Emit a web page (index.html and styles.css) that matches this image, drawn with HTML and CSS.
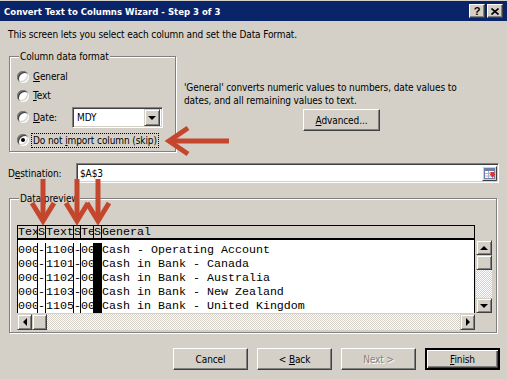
FILE: index.html
```html
<!DOCTYPE html>
<html lang="en">
<head>
  <meta charset="UTF-8" />
  <title>Convert Text to Columns Wizard - Step 3 of 3</title>
  <link rel="stylesheet" href="styles.css">
</head>
<body>
  <div class="window">
    <div class="titlebar">
      <span class="title">Convert Text to Columns Wizard - Step 3 of 3</span>
      <div class="title-buttons">
        <span class="tbtn">?</span>
        <span class="tbtn">
          <svg width="8" height="7" viewBox="0 0 8 7"><path d="M0.5 0.5 L7.5 6.5 M7.5 0.5 L0.5 6.5" stroke="#000" stroke-width="1.6"/></svg>
        </span>
      </div>
    </div>

    <div class="content">
      <p class="intro">This screen lets you select each column and set the Data Format.</p>

      <div class="top-row">
        <fieldset class="group format">
          <legend>Column data format</legend>
          <div class="radio-row"><span class="radio"></span><span><u>G</u>eneral</span></div>
          <div class="radio-row"><span class="radio"></span><span><u>T</u>ext</span></div>
          <div class="radio-row date-row">
            <span class="radio"></span>
            <span class="date-label"><u>D</u>ate:</span>
            <div class="select">
              <span class="select-value">MDY</span>
              <span class="select-btn"><span class="tri-down"></span></span>
            </div>
          </div>
          <div class="radio-row skip-row">
            <span class="radio checked"></span>
            <span class="focused">Do not <u>i</u>mport column (skip)</span>
          </div>
        </fieldset>

        <div class="info">
          <p>'General' converts numeric values to numbers, date values to<br>dates, and all remaining values to text.</p>
          <button class="btn advanced"><u>A</u>dvanced...</button>
        </div>
      </div>

      <div class="dest-row">
        <span class="dest-label">D<u>e</u>stination:</span>
        <div class="field">
          <span class="field-value">$A$3</span>
          <svg class="ref-icon" width="15" height="15" viewBox="0 0 15 15">
            <rect x="0.5" y="0.5" width="14" height="14" fill="#d4d0c8"/>
            <path d="M0.5 14.5 V0.5 H14.5" stroke="#fff" fill="none"/>
            <path d="M0.5 14.5 H14.5 V0.5" stroke="#404040" fill="none"/>
            <rect x="2.5" y="2.5" width="10" height="10" fill="#fff" stroke="#6d7fa8"/>
            <rect x="3" y="3" width="9" height="2" fill="#6d7fa8"/>
            <path d="M3 7.5 H12 M3 10 H12 M6.5 5 V12" stroke="#9fb3d8"/>
            <path d="M7 6 L12 6 L12 8 L13.5 8 L10.5 12 L7.5 8 L9 8 L9 7 Z" fill="#e0342a"/>
          </svg>
        </div>
      </div>

      <fieldset class="group preview">
        <legend>Data preview</legend>
        <div class="preview-grid">
          <div class="grid-head">
            <span class="c c1">Tex</span><span class="c c2">S</span><span class="c c3">Text</span><span class="c c4">S</span><span class="c c5">Te</span><span class="c c6">S</span><span class="c c7">General</span>
          </div>
          <div class="grid-body">
            <div class="grid-row"><span class="c c1">000</span><span class="c c2">-</span><span class="c c3">1100</span><span class="c c4">-</span><span class="c c5">00</span><span class="c c6 skip"></span><span class="c c7">Cash - Operating Account</span></div>
            <div class="grid-row"><span class="c c1">000</span><span class="c c2">-</span><span class="c c3">1101</span><span class="c c4">-</span><span class="c c5">00</span><span class="c c6 skip"></span><span class="c c7">Cash in Bank - Canada</span></div>
            <div class="grid-row"><span class="c c1">000</span><span class="c c2">-</span><span class="c c3">1102</span><span class="c c4">-</span><span class="c c5">00</span><span class="c c6 skip"></span><span class="c c7">Cash in Bank - Australia</span></div>
            <div class="grid-row"><span class="c c1">000</span><span class="c c2">-</span><span class="c c3">1103</span><span class="c c4">-</span><span class="c c5">00</span><span class="c c6 skip"></span><span class="c c7">Cash in Bank - New Zealand</span></div>
            <div class="grid-row"><span class="c c1">000</span><span class="c c2">-</span><span class="c c3">1105</span><span class="c c4">-</span><span class="c c5">00</span><span class="c c6 skip"></span><span class="c c7">Cash in Bank - United Kingdom</span></div>
          </div>
          <div class="vscroll">
            <span class="sbtn"><span class="tri-up"></span></span>
            <span class="thumb"></span>
            <span class="track"></span>
            <span class="sbtn"><span class="tri-down"></span></span>
          </div>
          <div class="hscroll">
            <span class="sbtn"><span class="tri-left"></span></span>
            <span class="thumb"></span>
            <span class="track"></span>
            <span class="sbtn"><span class="tri-right"></span></span>
          </div>
        </div>
      </fieldset>
    </div>

    <div class="actions">
      <button class="btn">Cancel</button>
      <button class="btn">&lt; <u>B</u>ack</button>
      <button class="btn disabled">Next &gt;</button>
      <button class="btn default"><u>F</u>inish</button>
    </div>

    <!-- flechas rojas de anotación -->
    <svg class="arrows" width="507" height="379" viewBox="0 0 507 379">
      <g stroke="#c4472d" stroke-width="5" fill="none" stroke-linejoin="miter">
        <path d="M169 141 H229"/>
        <path d="M188 128 L169 141 L188 154"/>
        <path d="M43 179 V220"/>
        <path d="M32 203 L43 221 L54 203"/>
        <path d="M77 179 V220"/>
        <path d="M66 203 L77 221 L88 203"/>
        <path d="M98 179 V220"/>
        <path d="M87 203 L98 221 L109 203"/>
      </g>
    </svg>
  </div>
</body>
</html>
```

FILE: styles.css
```css
* {
  box-sizing: border-box;
}

body {
  margin: 0;
  background: #d4d0c8;
  font-family: 'DejaVu Sans Condensed', 'Liberation Sans', Arial, sans-serif;
  font-size: 10px;
  letter-spacing: -0.1px;
  color: #000;
}

.window {
  position: relative;
  width: 507px;
  height: 379px;
  padding-top: 1px;
  background: #d4d0c8;
  overflow: hidden;
}

/* barra de título */
.titlebar {
  height: 20px;
  background: #0a246a;
  display: flex;
  align-items: center;
  justify-content: space-between;
  padding: 0 4px;
}

.title {
  color: #fff;
  font-weight: bold;
  font-size: 9.5px;
  letter-spacing: 0;
}

.title-buttons {
  display: flex;
  gap: 2px;
}

.tbtn {
  width: 16px;
  height: 14px;
  background: #d4d0c8;
  border: 1px solid;
  border-color: #fff #404040 #404040 #fff;
  box-shadow: inset -1px -1px #808080;
  display: flex;
  align-items: center;
  justify-content: center;
  font-family: 'Liberation Sans', Arial, sans-serif;
  font-weight: bold;
  font-size: 11px;
  line-height: 11px;
}

.content {
  padding: 0 8px;
}

.intro {
  margin: 7px 0 0;
  line-height: 13px;
}

p {
  margin: 0;
}

/* marcos agrupados */
.group {
  margin: 0;
  padding: 0;
  min-width: 0;
  border: 1px solid #808080;
  box-shadow: inset 1px 1px #fff, 1px 1px #fff;
}

.group legend {
  margin-left: 2px;
  padding: 0 1px;
  line-height: 13px;
  background: #d4d0c8;
}

.top-row {
  display: flex;
  gap: 8px;
  margin-top: 9px;
}

.format {
  width: 167px;
  margin-left: 1px;
  padding: 4px 0 0 7px;
}

.radio-row {
  display: flex;
  align-items: center;
  gap: 4px;
  height: 19px;
}

.date-row {
  height: 24px;
}

.skip-row {
  height: 22px;
}

.radio {
  position: relative;
  width: 12px;
  height: 12px;
  flex: none;
  border-radius: 50%;
  background: #fff;
  box-shadow: inset 1px 1px #808080, inset -1px -1px #fff, inset 2px 2px #404040, inset -2px -2px #d4d0c8;
}

.radio.checked::after {
  content: '';
  position: absolute;
  left: 4px;
  top: 4px;
  width: 4px;
  height: 4px;
  border-radius: 50%;
  background: #000;
}

.date-label {
  width: 35px;
}

.select {
  width: 91px;
  height: 21px;
  display: flex;
  align-items: center;
  justify-content: space-between;
  background: #fff;
  border: 1px solid;
  border-color: #808080 #fff #fff #808080;
  box-shadow: inset 1px 1px #404040, inset -1px -1px #d4d0c8;
  padding: 2px;
}

.select-value {
  padding-left: 2px;
}

.select-btn {
  width: 16px;
  height: 17px;
  background: #d4d0c8;
  border: 1px solid;
  border-color: #d4d0c8 #404040 #404040 #d4d0c8;
  box-shadow: inset 1px 1px #fff, inset -1px -1px #808080;
  display: flex;
  align-items: center;
  justify-content: center;
}

.focused {
  outline: 1px dotted #000;
  padding: 0 1px;
  margin-left: -1px;
  line-height: 13px;
}

/* triangulitos */
.tri-down,
.tri-up,
.tri-left,
.tri-right {
  width: 0;
  height: 0;
  border: 4px solid transparent;
}

.tri-down {
  border-top-color: #000;
  border-bottom-width: 0;
  margin-top: 1px;
}

.tri-up {
  border-bottom-color: #000;
  border-top-width: 0;
}

.tri-left {
  border-right-color: #000;
  border-left-width: 0;
}

.tri-right {
  border-left-color: #000;
  border-right-width: 0;
}

.info {
  width: 315px;
  padding-top: 31px;
  line-height: 13px;
}

.btn {
  font-family: inherit;
  font-size: 10px;
  letter-spacing: inherit;
  color: #000;
  background: #d4d0c8;
  width: 75px;
  height: 22px;
  padding: 0;
  border: 1px solid;
  border-color: #fff #404040 #404040 #fff;
  box-shadow: inset -1px -1px #808080;
  border-radius: 0;
}

.advanced {
  display: block;
  width: 77px;
  margin: 2px auto 0;
}

.dest-row {
  display: flex;
  align-items: center;
  margin-top: 11px;
}

.dest-label {
  width: 68px;
}

.field {
  flex: 1;
  height: 20px;
  display: flex;
  align-items: center;
  justify-content: space-between;
  background: #fff;
  border: 1px solid;
  border-color: #808080 #fff #fff #808080;
  box-shadow: inset 1px 1px #404040, inset -1px -1px #d4d0c8;
  padding: 0 1px 0 3px;
}

.ref-icon {
  display: block;
}

/* vista previa */
.preview {
  margin: 9px 2px 0 1px;
  padding: 20px 0 2px 7px;
}

.preview-grid {
  display: grid;
  grid-template-columns: 458px 16px;
  grid-template-rows: 15px 73px 17px;
  column-gap: 1px;
  font-family: 'Liberation Mono', 'Courier New', monospace;
  font-size: 11.67px;
  letter-spacing: 0;
}

.grid-head {
  grid-column: 1 / 3;
  width: 458px;
  display: flex;
  background: #d4d0c8;
  border: 1px solid #000;
  border-bottom-width: 2px;
  line-height: 12px;
}

.grid-body {
  background: #fff;
  border-left: 1px solid #000;
  border-right: 1px solid #000;
  padding-top: 3px;
}

.grid-row {
  display: flex;
  height: 14px;
  line-height: 14px;
}

.c {
  white-space: pre;
  overflow: hidden;
  border-right: 1px solid #000;
  flex: none;
}

.c1 { width: 20px; }
.c2 { width: 8px; }
.c3 { width: 28px; }
.c4 { width: 7px; }
.c5 { width: 13px; }
.c6 { width: 8px; }
.c7 { flex: 1; border-right: none; }

.grid-row .c { height: 14px; }
.grid-row .c2,
.grid-row .c4 { text-align: center; }

.skip {
  background: #000;
}

.vscroll {
  display: flex;
  flex-direction: column;
}

.hscroll {
  grid-column: 1;
  display: flex;
  margin-top: 1px;
}

.sbtn,
.thumb {
  flex: none;
  width: 16px;
  height: 15px;
  background: #d4d0c8;
  border: 1px solid;
  border-color: #d4d0c8 #404040 #404040 #d4d0c8;
  box-shadow: inset 1px 1px #fff, inset -1px -1px #808080;
  display: flex;
  align-items: center;
  justify-content: center;
}

.hscroll .sbtn,
.hscroll .thumb {
  width: 15px;
  height: 16px;
}

.track {
  flex: 1;
  background: repeating-conic-gradient(#d4d0c8 0 25%, #fff 0 50%) 0 0 / 2px 2px;
}

/* botones inferiores */
.actions {
  display: flex;
  justify-content: flex-end;
  gap: 9px;
  padding-right: 7px;
  margin-top: 15px;
}

.btn.disabled {
  color: #808080;
  text-shadow: 1px 1px #fff;
}

.btn.default {
  outline: 1px solid #000;
  outline-offset: -1px;
  border: 2px solid;
  border-color: #000;
  box-shadow: inset 1px 1px #fff, inset -1px -1px #404040, inset -2px -2px #808080;
}

.arrows {
  position: absolute;
  left: 0;
  top: 0;
  pointer-events: none;
}
```
